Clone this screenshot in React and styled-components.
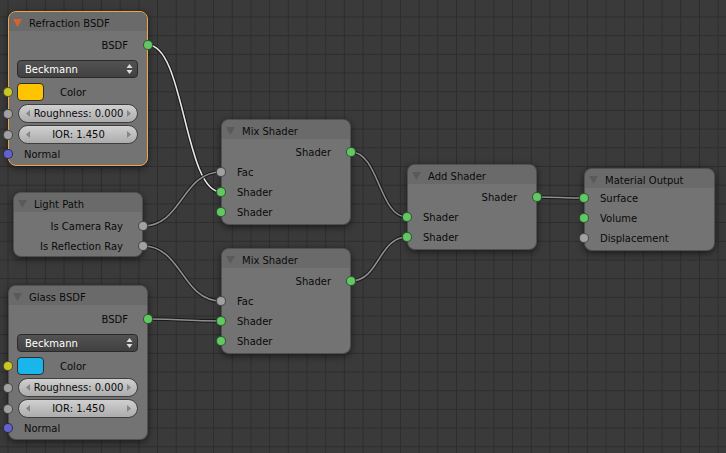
import React from 'react';
import styled, { createGlobalStyle } from 'styled-components';

const GlobalStyle = createGlobalStyle`
  html, body {
    margin: 0;
    padding: 0;
    background: #393939;
  }
  body {
    font-family: "DejaVu Sans", "Noto Sans", sans-serif;
  }
`;

const SOCKET = {
  shader: '#63c763',
  float: '#a1a1a1',
  color: '#c7c729',
  vector: '#6363c7',
};

const Canvas = styled.div`
  position: relative;
  width: 726px;
  height: 453px;
  overflow: hidden;
  background-color: #3a3a3a;
  background-image:
    linear-gradient(to right, #2d2d2d 1px, transparent 1px),
    linear-gradient(to bottom, #2d2d2d 1px, transparent 1px);
  background-size: 18.7px 18.7px;
  background-position: 7.5px 16.5px;
`;

const Wires = styled.svg`
  position: absolute;
  left: 0;
  top: 0;
  pointer-events: none;
`;

const NodeBox = styled.div`
  position: absolute;
  left: ${p => p.$x}px;
  top: ${p => p.$y}px;
  width: ${p => p.$w}px;
  box-sizing: border-box;
  background: #737373;
  border-radius: 8px;
  border: 1px solid ${p => (p.$selected ? '#f0a446' : 'rgba(0, 0, 0, 0.3)')};
  box-shadow: 0 2px 7px rgba(0, 0, 0, 0.55);
  padding-bottom: ${p => p.$pb}px;
  color: #0a0a0a;
  font-size: 10px;
`;

const Header = styled.div`
  height: 19px;
  box-sizing: border-box;
  padding: 3px 0 0 4px;
  display: flex;
  align-items: center;
  gap: 7px;
  background: #6a6a6a;
  border-radius: 7px 7px 0 0;
  white-space: nowrap;
`;

const Body = styled.div`
  padding-top: ${p => p.$pt}px;
`;

const Row = styled.div`
  position: relative;
  height: 20px;
  display: flex;
  align-items: center;
  justify-content: ${p => (p.$out ? 'flex-end' : 'flex-start')};
  padding: ${p => (p.$out ? '0 19px 0 0' : '0 0 0 15px')};
  white-space: nowrap;
`;

const Socket = styled.span`
  position: absolute;
  top: 50%;
  ${p => (p.$out ? 'right: -6px;' : `left: ${p.$left ?? -6}px;`)}
  width: 8px;
  height: 8px;
  margin-top: -5px;
  border-radius: 50%;
  background: ${p => p.$color};
  border: 1px solid rgba(0, 0, 0, 0.55);
`;

const Dropdown = styled.div`
  height: 18px;
  margin: 5px 9px 0 8px;
  box-sizing: border-box;
  border: 1px solid #2a2a2a;
  border-radius: 4px;
  background: linear-gradient(to bottom, #525252, #414141);
  color: #ffffff;
  display: flex;
  align-items: center;
  justify-content: space-between;
  padding: 0 4px 0 7px;
`;

const ColorRow = styled.div`
  position: relative;
  height: 18px;
  margin-top: 5px;
  display: flex;
  align-items: center;
  gap: 16px;
  padding-left: 8px;
`;

const Swatch = styled.div`
  width: 27px;
  height: 18px;
  box-sizing: border-box;
  border-radius: 4px;
  border: 1px solid #2e2e2e;
  background: ${p => p.$color};
`;

const Slider = styled.div`
  position: relative;
  height: 19px;
  margin: ${p => p.$mt}px 9px 0 9px;
  box-sizing: border-box;
  border: 1px solid #3e3e3e;
  border-radius: 10px;
  background: linear-gradient(to bottom, #d0d0d0, #acacac);
  display: flex;
  align-items: center;
  justify-content: space-between;
  padding: 0 6px 0 7px;
`;

const SliderLabel = styled.span`
  flex: 1;
  text-align: center;
  white-space: nowrap;
`;

const Triangle = ({ color }) => (
  <svg width="9" height="8" viewBox="0 0 9 8">
    <path d="M0 0 L9 0 L4.5 8 Z" fill={color} />
  </svg>
);

const UpDown = () => (
  <svg width="7" height="12" viewBox="0 0 7 12">
    <path d="M0.5 5 L3.5 1 L6.5 5 Z" fill="#dcdcdc" />
    <path d="M0.5 7 L3.5 11 L6.5 7 Z" fill="#dcdcdc" />
  </svg>
);

const Arrow = ({ right }) => (
  <svg width="4" height="7" viewBox="0 0 4 7">
    <path d={right ? 'M0 0 L4 3.5 L0 7 Z' : 'M4 0 L0 3.5 L4 7 Z'} fill="#858585" />
  </svg>
);

const Node = ({ x, y, w, title, selected, pt = 3, pb = 2, children }) => (
  <NodeBox $x={x} $y={y} $w={w} $selected={selected} $pb={pb}>
    <Header>
      <Triangle color={selected ? '#d9622a' : '#5a5a5a'} />
      {title}
    </Header>
    <Body $pt={pt}>{children}</Body>
  </NodeBox>
);

const Output = ({ label, type = 'shader' }) => (
  <Row $out>
    {label}
    <Socket $out $color={SOCKET[type]} />
  </Row>
);

const Input = ({ label, type = 'shader' }) => (
  <Row>
    <Socket $color={SOCKET[type]} />
    {label}
  </Row>
);

const BsdfNode = ({ x, y, title, color, selected }) => (
  <Node x={x} y={y} w={140} title={title} selected={selected} pt={4} pb={1}>
    <Output label="BSDF" />
    <Dropdown>
      Beckmann
      <UpDown />
    </Dropdown>
    <ColorRow>
      <Socket $color={SOCKET.color} />
      <Swatch $color={color} />
      Color
    </ColorRow>
    <Slider $mt={3}>
      <Socket $color={SOCKET.float} $left={-16} />
      <Arrow />
      <SliderLabel>Roughness: 0.000</SliderLabel>
      <Arrow right />
    </Slider>
    <Slider $mt={2}>
      <Socket $color={SOCKET.float} $left={-16} />
      <Arrow />
      <SliderLabel>IOR: 1.450</SliderLabel>
      <Arrow right />
    </Slider>
    <Input label="Normal" type="vector" />
  </Node>
);

// socket positions, taken from the node layout above
const rowY = (y, pt, i) => y + 20 + pt + 10 + 20 * i;

const WIRES = [
  { a: [148, 45], b: [221, rowY(119, 3, 2)], hot: true },
  { a: [143, rowY(192, 4, 0)], b: [221, rowY(119, 3, 1)] },
  { a: [143, rowY(192, 4, 1)], b: [221, rowY(248, 3, 1)] },
  { a: [148, 285 + 34], b: [221, rowY(248, 3, 2)] },
  { a: [351, rowY(119, 3, 0)], b: [407, rowY(164, 3, 1)] },
  { a: [351, rowY(248, 3, 0)], b: [407, rowY(164, 3, 2)] },
  { a: [537, rowY(164, 3, 0)], b: [584, rowY(168, 0, 0)] },
];

const wirePath = ({ a, b }) => {
  const h = Math.abs(b[0] - a[0]) * 0.5;
  return `M${a[0]} ${a[1]} C${a[0] + h} ${a[1]} ${b[0] - h} ${b[1]} ${b[0]} ${b[1]}`;
};

export default function App() {
  return (
    <>
      <GlobalStyle />
      <Canvas>
        <Wires width="726" height="453">
          {WIRES.map((w, i) => (
            <g key={i} fill="none" strokeLinecap="round">
              <path d={wirePath(w)} stroke="rgba(20,20,20,0.85)" strokeWidth="3.6" />
              <path d={wirePath(w)} stroke={w.hot ? '#e6e6e6' : '#8e8e8e'} strokeWidth="1.6" />
            </g>
          ))}
        </Wires>

        <BsdfNode x={8} y={11} title="Refraction BSDF" color="#ffc400" selected />

        <Node x={13} y={192} w={130} title="Light Path" pt={4} pb={0}>
          <Output label="Is Camera Ray" type="float" />
          <Output label="Is Reflection Ray" type="float" />
        </Node>

        <BsdfNode x={8} y={285} title="Glass BSDF" color="#1ab5ea" />

        <Node x={221} y={119} w={130} title="Mix Shader">
          <Output label="Shader" />
          <Input label="Fac" type="float" />
          <Input label="Shader" />
          <Input label="Shader" />
        </Node>

        <Node x={221} y={248} w={130} title="Mix Shader">
          <Output label="Shader" />
          <Input label="Fac" type="float" />
          <Input label="Shader" />
          <Input label="Shader" />
        </Node>

        <Node x={407} y={164} w={130} title="Add Shader">
          <Output label="Shader" />
          <Input label="Shader" />
          <Input label="Shader" />
        </Node>

        <Node x={584} y={168} w={131} title="Material Output" pt={0}>
          <Input label="Surface" />
          <Input label="Volume" />
          <Input label="Displacement" type="float" />
        </Node>
      </Canvas>
    </>
  );
}
